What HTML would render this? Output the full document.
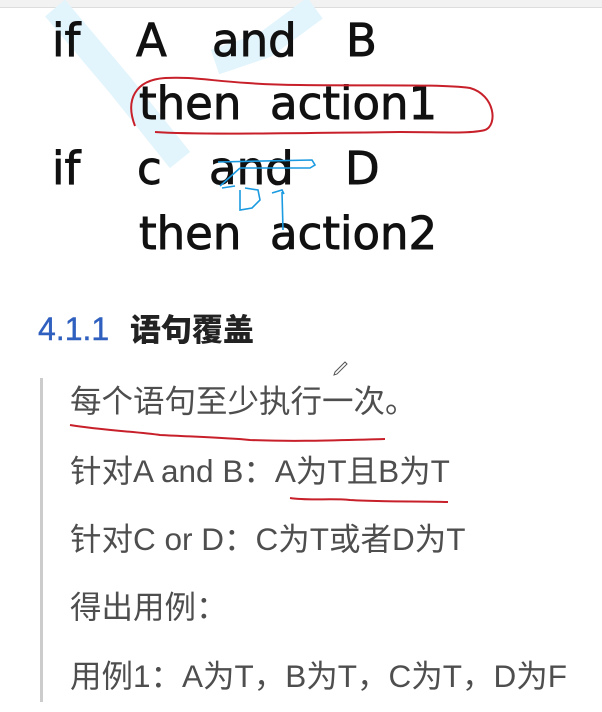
<!DOCTYPE html>
<html><head><meta charset="utf-8"><style>
body{margin:0;width:602px;height:712px;background:#fff;position:relative;overflow:hidden}
.t{position:absolute;font-family:"DejaVu Sans","Liberation Sans",sans-serif;font-size:45px;color:#111;line-height:1;white-space:pre;-webkit-text-stroke:0.9px #111}
.c{position:absolute;font-family:"Liberation Sans","Noto Sans CJK SC",sans-serif;font-size:31.5px;color:#4e4e4e;line-height:1;white-space:pre;left:70px}
</style></head><body>
<div style="position:absolute;left:0;top:0;width:602px;height:7px;background:#f2f2f2;border-bottom:1px solid #ddd"></div>
<svg style="position:absolute;left:0;top:0" width="602" height="712">
<g fill="none" stroke="#e2f4fc" stroke-width="26">
<polyline points="55,8 120,85 180,160"/>
<polyline points="315,8 265,45 215,62"/>
</g>
</svg>
<div class="t" style="left:52px;top:18px">if</div>
<div class="t" style="left:136px;top:18px">A</div>
<div class="t" style="left:212px;top:18px">and</div>
<div class="t" style="left:346px;top:18px">B</div>
<div class="t" style="left:139px;top:81px">then</div>
<div class="t" style="left:270px;top:81px">action1</div>
<div class="t" style="left:52px;top:146px">if</div>
<div class="t" style="left:137px;top:146px">c</div>
<div class="t" style="left:209px;top:146px">and</div>
<div class="t" style="left:345px;top:146px">D</div>
<div class="t" style="left:139px;top:211px">then</div>
<div class="t" style="left:270px;top:211px">action2</div>
<svg style="position:absolute;left:0;top:0" width="602" height="712">
<path d="M135,126 C125,100 135,80 165,78 C200,76 220,84 300,85 C380,86 440,84 470,88 C495,95 498,125 485,130 C470,134 440,132 400,132 C300,133 200,135 155,132" fill="none" stroke="#c8202a" stroke-width="2"/>
<path d="M218,162 L312,160 L315,165 L310,168 L240,168 M240,168 L220,186 M235,186 L222,188 M240,190 L240,210 L252,208 L260,200 L258,190 L245,188 M272,193 L282,190 L284,194 M282,192 L283,230" fill="none" stroke="#1a9ae0" stroke-width="1.6"/>
<path d="M70,425 C100,430 140,432 160,435 C200,437 230,438 250,440 C300,442 340,440 385,439" fill="none" stroke="#c8202a" stroke-width="2"/>
<path d="M290,498 C310,501 330,498 350,500 C380,502 420,501 448,502" fill="none" stroke="#c8202a" stroke-width="2"/>
<path d="M335,372 L345,362 L347,364 L337,374 L334,375 Z" fill="none" stroke="#555" stroke-width="1"/>
</svg>
<div style="position:absolute;left:38px;top:313px;font-family:'Liberation Sans','Noto Sans CJK SC',sans-serif;font-size:32px;line-height:1;white-space:pre"><span style="color:#2f5fbf;-webkit-text-stroke:0.4px #2f5fbf">4.1.1</span><span style="color:#222;position:absolute;left:92px;top:-1px;font-family:'Noto Sans CJK SC',sans-serif;font-weight:900;font-size:31px">语句覆盖</span></div>
<div style="position:absolute;left:40px;top:378px;width:3px;height:324px;background:#ccc"></div>
<div class="c" style="top:386px">每个语句至少执行一次。</div>
<div class="c" style="top:456px">针对A and B：A为T且B为T</div>
<div class="c" style="top:524px">针对C or D：C为T或者D为T</div>
<div class="c" style="top:592px">得出用例：</div>
<div class="c" style="top:661px">用例1：A为T，B为T，C为T，D为F</div>
</body></html>
